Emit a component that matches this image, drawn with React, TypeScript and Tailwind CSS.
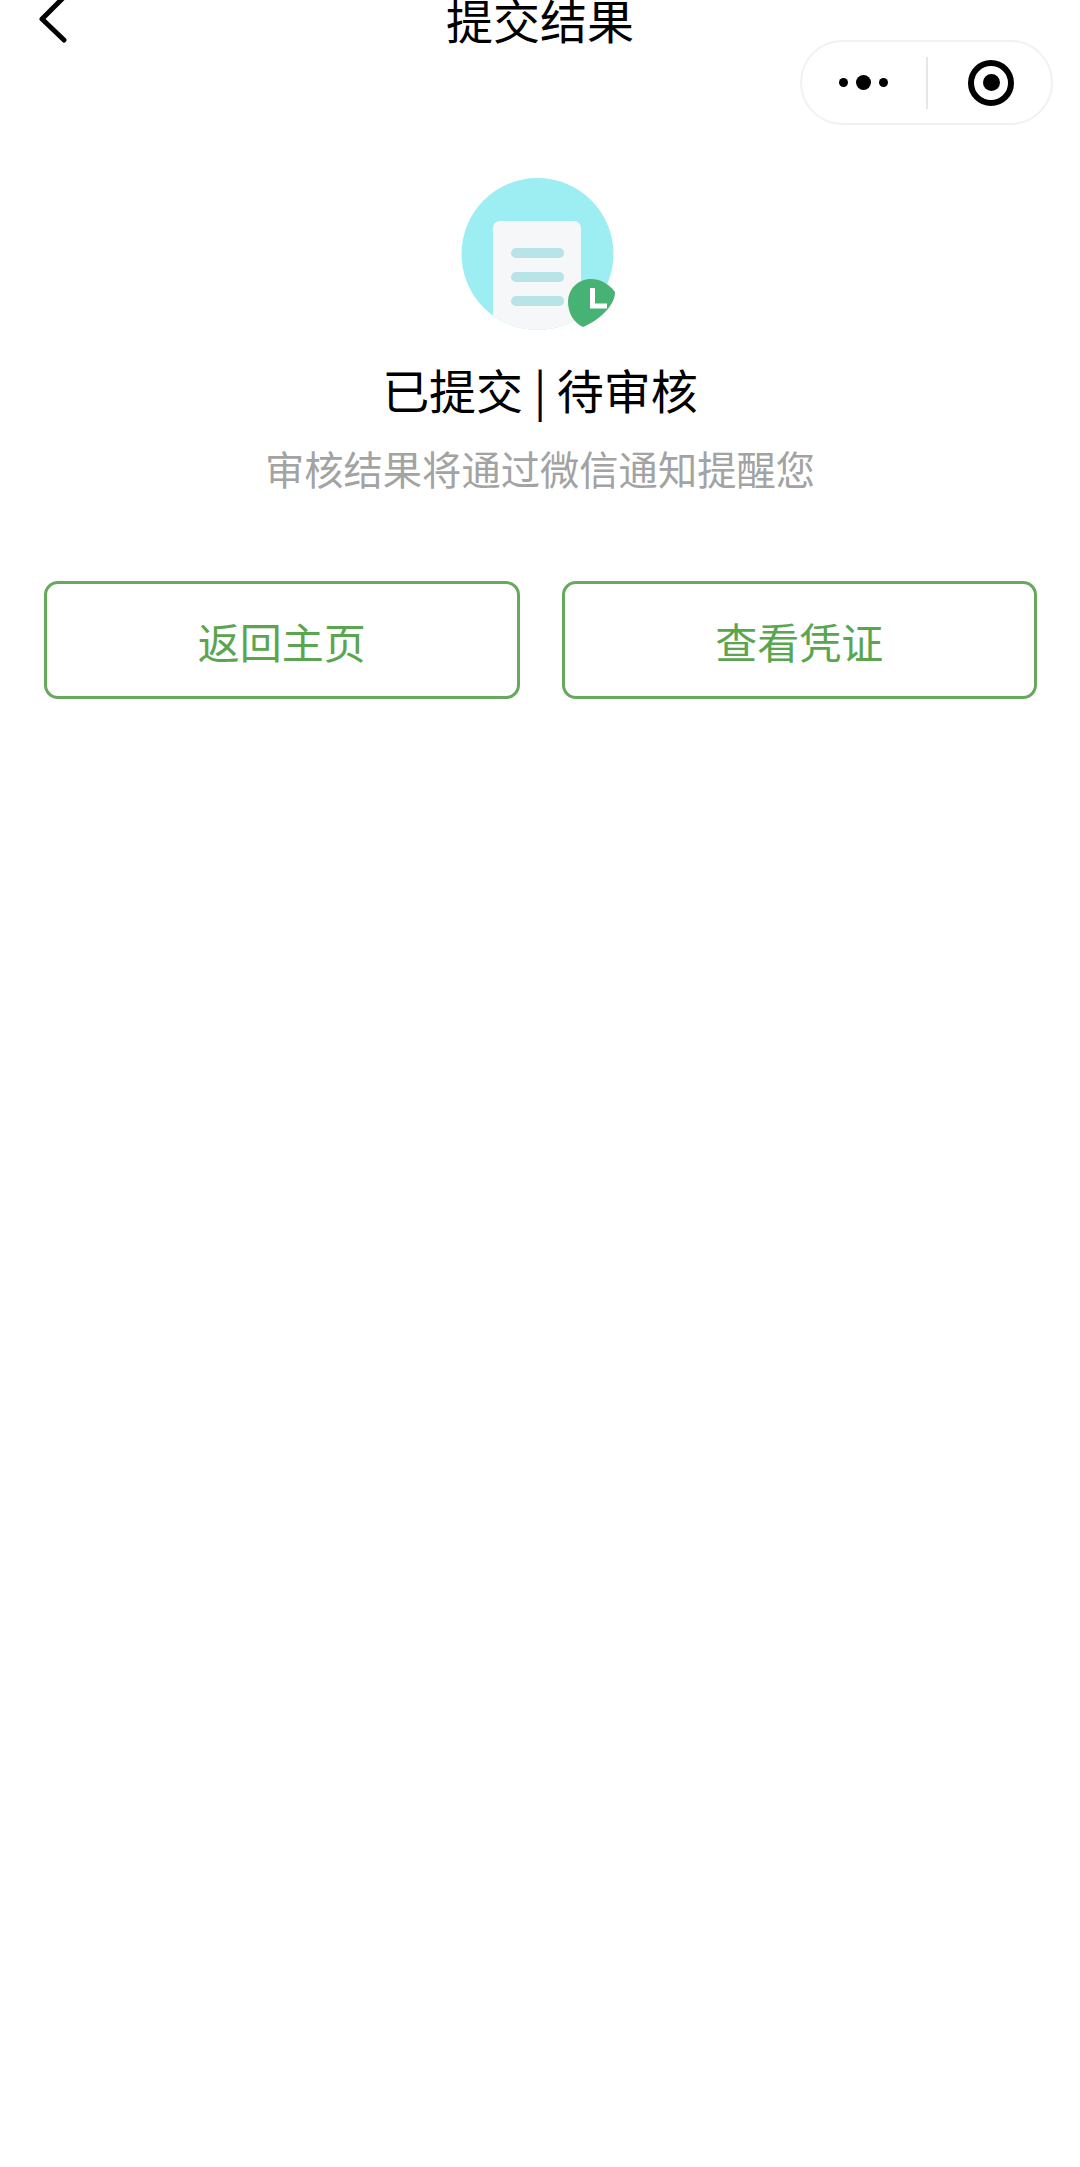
const font = "font-['Noto_Sans_CJK_SC','Noto_Sans',sans-serif]"

function StatusIcon() {
  // viewBox uses page coordinates so the numbers line up with the screenshot
  return (
    <svg width="160" height="160" viewBox="460 175 160 160" className="block">
      <defs>
        <clipPath id="disc">
          <circle cx="537.5" cy="254" r="76" />
        </clipPath>
      </defs>
      <circle cx="537.5" cy="254" r="76" fill="#9deef3" />
      <g clipPath="url(#disc)">
        <rect x="493" y="221" width="88" height="130" rx="7" fill="#f5f7f8" />
      </g>
      <rect x="511" y="248" width="53" height="10" rx="5" fill="#b8e4e7" />
      <rect x="511" y="272" width="53" height="10" rx="5" fill="#b8e4e7" />
      <rect x="511" y="296" width="53" height="10" rx="5" fill="#b8e4e7" />
      <path
        d="M591 279C600 279 608 283 615 292C615 298 612 304 607 310C600 318 592 323 583 327C574 323 568 313 568 302C568 289 578 279 591 279Z"
        fill="#46b274"
      />
      <path d="M592.5 288V306H607" fill="none" stroke="#fff" strokeWidth="5" />
    </svg>
  )
}

export default function App() {
  return (
    <div className={`relative min-h-[2167px] w-full bg-white ${font}`}>
      <header className="relative flex h-[36px] items-center justify-center">
        <button className="absolute left-[36px] top-0 text-black">
          <svg width="34" height="44" viewBox="0 0 34 44" className="block">
            <path
              d="M28 -3L6 19L28 40"
              fill="none"
              stroke="currentColor"
              strokeWidth="5"
              strokeLinecap="round"
              strokeLinejoin="round"
            />
          </svg>
        </button>
        <h1 className="text-[47px] leading-[47px] font-normal text-black">提交结果</h1>
      </header>

      <div className="absolute right-[27px] top-[40px] flex h-[85px] w-[253px] items-center rounded-full border-2 border-[#f1f1f1] bg-white">
        <div className="flex w-[122px] items-center justify-center gap-[8px]">
          <span className="h-[9px] w-[9px] rounded-full bg-black" />
          <span className="h-[15px] w-[15px] rounded-full bg-black" />
          <span className="h-[9px] w-[9px] rounded-full bg-black" />
        </div>
        <div className="ml-[2px] h-[52px] w-[2px] bg-[#e6e6e6]" />
        <div className="flex flex-1 items-center justify-center pl-[3px]">
          <div className="flex h-[46px] w-[46px] items-center justify-center rounded-full border-[6px] border-black">
            <span className="h-[17px] w-[17px] rounded-full bg-black" />
          </div>
        </div>
      </div>

      <main className="flex flex-col items-center pt-[139px]">
        <StatusIcon />
        <h2 className="mt-[26px] text-[47px] leading-[56px] font-normal whitespace-pre text-black">已提交 | 待审核</h2>
        <p className="mt-[26px] text-[39.3px] leading-[50px] text-[#a3a3a3]">审核结果将通过微信通知提醒您</p>

        <div className="mt-[88px] flex w-full gap-[42px] pl-[44px] pr-[43px]">
          <button className="flex h-[118px] flex-1 items-center justify-center rounded-[14px] border-[3px] border-[#66a85c] text-[42px] text-[#5aa64f]">
            返回主页
          </button>
          <button className="flex h-[118px] flex-1 items-center justify-center rounded-[14px] border-[3px] border-[#66a85c] text-[42px] text-[#5aa64f]">
            查看凭证
          </button>
        </div>
      </main>
    </div>
  )
}
